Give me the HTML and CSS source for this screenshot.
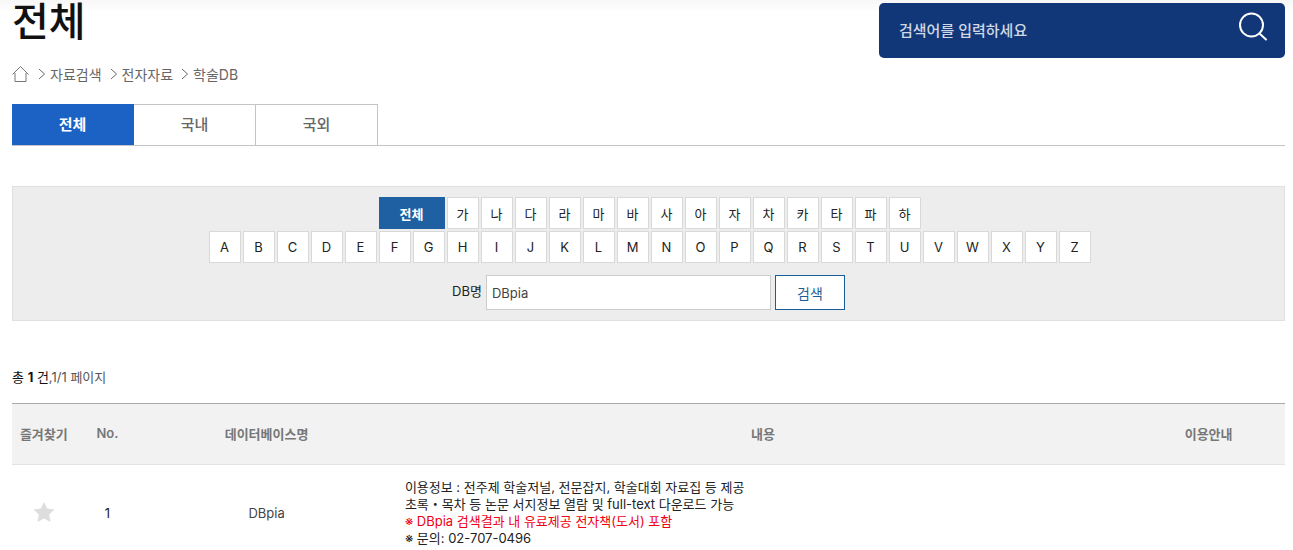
FILE: index.html
```
<!DOCTYPE html>
<html lang="ko">
<head>
  <meta charset="utf-8">
  <meta name="viewport" content="width=device-width, initial-scale=1">
  <title>학술DB</title>
  <link rel="stylesheet" href="styles.css">
</head>
<body>
  <header class="page-header">
    <div class="page-title">
      <h1>전체</h1>
      <nav class="breadcrumb">
        <a href="#" aria-label="Home">
          <svg class="home-icon" viewBox="0 0 18 18" width="18" height="18"><path d="M.5 9.5 8.500 1.500l8 8M3 8v8.500h11V8"/></svg>
        </a>
        <svg class="arrow" viewBox="0 0 8 12" width="8" height="12"><path d="M1 1l5.500 5L1 11"/></svg>
        <a href="#">자료검색</a>
        <svg class="arrow" viewBox="0 0 8 12" width="8" height="12"><path d="M1 1l5.500 5L1 11"/></svg>
        <a href="#">전자자료</a>
        <svg class="arrow" viewBox="0 0 8 12" width="8" height="12"><path d="M1 1l5.500 5L1 11"/></svg>
        <a href="#">학술DB</a>
      </nav>
    </div>
    <form class="site-search">
      <input type="text" placeholder="검색어를 입력하세요" aria-label="검색어">
      <button type="button" aria-label="검색">
        <svg viewBox="0 0 30 30" width="30" height="30"><circle cx="13.500" cy="13" r="11.500"/><path d="M21.500 21.500l6.500 6"/></svg>
      </button>
    </form>
  </header>

  <nav class="tabs">
    <a href="#" class="active">전체</a>
    <a href="#">국내</a>
    <a href="#">국외</a>
  </nav>

  <form class="filter">
    <div class="letters">
      <button type="button" class="all">전체</button>
      <button type="button">가</button>
      <button type="button">나</button>
      <button type="button">다</button>
      <button type="button">라</button>
      <button type="button">마</button>
      <button type="button">바</button>
      <button type="button">사</button>
      <button type="button">아</button>
      <button type="button">자</button>
      <button type="button">차</button>
      <button type="button">카</button>
      <button type="button">타</button>
      <button type="button">파</button>
      <button type="button">하</button>
    </div>
    <div class="letters">
      <button type="button">A</button>
      <button type="button">B</button>
      <button type="button">C</button>
      <button type="button">D</button>
      <button type="button">E</button>
      <button type="button">F</button>
      <button type="button">G</button>
      <button type="button">H</button>
      <button type="button">I</button>
      <button type="button">J</button>
      <button type="button">K</button>
      <button type="button">L</button>
      <button type="button">M</button>
      <button type="button">N</button>
      <button type="button">O</button>
      <button type="button">P</button>
      <button type="button">Q</button>
      <button type="button">R</button>
      <button type="button">S</button>
      <button type="button">T</button>
      <button type="button">U</button>
      <button type="button">V</button>
      <button type="button">W</button>
      <button type="button">X</button>
      <button type="button">Y</button>
      <button type="button">Z</button>
    </div>
    <div class="db-search">
      <label for="dbname">DB명</label>
      <input type="text" id="dbname" value="DBpia">
      <button type="button">검색</button>
    </div>
  </form>

  <p class="count"><span>총 <strong>1</strong> 건</span>,1/1 페이지</p>

  <table class="db-table">
    <thead>
      <tr>
        <th class="col-fav">즐겨찾기</th>
        <th class="col-no">No.</th>
        <th class="col-name">데이터베이스명</th>
        <th>내용</th>
        <th class="col-guide">이용안내</th>
      </tr>
    </thead>
    <tbody>
      <tr>
        <td>
          <button type="button" class="star" aria-label="즐겨찾기">
            <svg viewBox="0 0 22 22" width="22" height="22"><path d="M11 1l3.200 6.600 7.300 1-5.300 5 1.300 7.400L11 17.500 4.500 21l1.300-7.400-5.300-5 7.300-1z"/></svg>
          </button>
        </td>
        <td>1</td>
        <td><a href="#">DBpia</a></td>
        <td class="desc">
          이용정보 : 전주제 학술저널, 전문잡지, 학술대회 자료집 등 제공<br>
          초록・목차 등 논문 서지정보 열람 및 full-text 다운로드 가능<br>
          <span class="notice">※ DBpia 검색결과 내 유료제공 전자책(도서) 포함</span><br>
          ※ 문의: 02-707-0496
        </td>
        <td></td>
      </tr>
    </tbody>
  </table>
</body>
</html>
```
FILE: styles.css
```
* {
  box-sizing: border-box;
}
body {
  margin: 0;
  padding: 0 8px 0 12px;
  font-family: Inter, "Noto Sans CJK KR", sans-serif;
  font-size: 13px;
  color: #222;
  background: linear-gradient(#f7f7f7, #fff 12px) no-repeat #fff;
}
a {
  color: inherit;
  text-decoration: none;
}
button, input {
  font-family: inherit;
  font-size: inherit;
}
button {
  padding: 0;
  cursor: pointer;
}
svg {
  display: block;
  fill: none;
}
.page-header {
  display: flex;
  justify-content: space-between;
  align-items: flex-start;
}
h1 {
  margin: 0;
  font-family: "Noto Sans CJK KR", sans-serif;
  font-size: 40px;
  font-weight: 500;
  line-height: 38px;
  color: #111;
}
.breadcrumb {
  display: flex;
  align-items: center;
  height: 20px;
  margin-top: 26px;
  font-size: 14px;
  color: #666;
}
.breadcrumb a {
  margin-right: 8px;
}
.home-icon {
  stroke: #777;
}
.arrow {
  margin-right: 4px;
  stroke: #666;
}
.site-search {
  display: flex;
  align-items: center;
  width: 406px;
  height: 55px;
  margin-top: 3px;
  padding: 0 17px 0 20px;
  border-radius: 5px;
  background: #113778;
}
.site-search input {
  flex: 1;
  min-width: 0;
  padding: 0;
  border: 0;
  outline: 0;
  background: none;
  font-size: 15px;
  font-weight: 500;
  color: #fff;
}
.site-search input::placeholder {
  color: #d0d8e6;
}
.site-search button {
  padding-bottom: 7px;
  border: 0;
  background: none;
}
.site-search svg {
  stroke: #fff;
  stroke-width: 2;
  stroke-linecap: round;
}
.tabs {
  display: flex;
  margin-top: 20px;
  border-bottom: 1px solid #c4c4c8;
}
.tabs a {
  width: 122px;
  height: 41px;
  border: 1px solid #c4c4c8;
  border-width: 1px 1px 0 0;
  line-height: 40px;
  text-align: center;
  font-size: 15px;
  font-weight: 500;
  color: #666;
}
.tabs .active {
  border-color: #1b62c4;
  background: #1b62c4;
  font-weight: 700;
  color: #fff;
}
.filter {
  margin-top: 40px;
  padding: 10px 0;
  border: 1px solid #e0e0e0;
  background: #ededed;
}
.letters {
  display: flex;
  justify-content: center;
  gap: 2px;
  margin-bottom: 2px;
  padding-left: 2px;
}
.letters button {
  width: 32px;
  height: 32px;
  border: 1px solid #d9d9d9;
  background: #fff;
  color: #222;
}
.letters .all {
  width: 66px;
  border-color: #1f60a3;
  background: #1f60a3;
  font-weight: 700;
  color: #fff;
}
.db-search {
  display: flex;
  justify-content: center;
  margin-top: 12px;
}
.db-search label {
  margin-right: 4px;
  line-height: 32px;
}
.db-search input {
  width: 285px;
  height: 35px;
  padding: 0 5px;
  border: 1px solid #ccc;
  background: #fff;
  color: #444;
}
.db-search button {
  width: 70px;
  height: 35px;
  margin-left: 4px;
  border: 1px solid #1a5e99;
  background: #fff;
  font-size: 14px;
  color: #1a5e99;
}
.count {
  margin: 46px 0 16px;
  line-height: 20px;
  color: #555;
}
.count span {
  color: #111;
}
.db-table {
  width: 100%;
  border-collapse: collapse;
  table-layout: fixed;
  border-top: 1px solid #aaa;
  text-align: center;
}
.db-table th {
  height: 61px;
  padding: 0 0 2px;
  border-bottom: 1px solid #e3e3e3;
  background: #f2f2f2;
  font-weight: 600;
  color: #777;
}
.db-table td {
  padding: 14px 0;
}
.db-table td a {
  color: #444;
}
.col-fav, .col-no {
  width: 5%;
}
.col-name {
  width: 20%;
}
.col-guide {
  width: 12%;
}
.db-table .desc {
  padding-left: 11px;
  text-align: left;
  line-height: 17px;
}
.notice {
  color: #f00014;
}
.star {
  border: 0;
  background: none;
}
.star svg {
  fill: #ddd;
}
```
